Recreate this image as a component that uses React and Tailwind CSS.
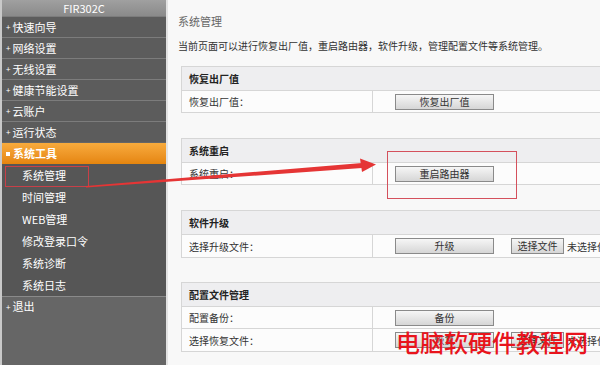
import React from 'react';

const font = { fontFamily: '"Noto Sans CJK SC", "Liberation Sans", sans-serif' };

const navTop = ['快速向导', '网络设置', '无线设置', '健康节能设置', '云账户', '运行状态'];
const subMenu = ['系统管理', '时间管理', 'WEB管理', '修改登录口令', '系统诊断', '系统日志'];

const Btn = ({ children, className = 'w-[99px]' }) => (
  <div
    className={`${className} h-[16px] flex items-center justify-center border border-[#8a8a8a] bg-gradient-to-b from-[#f6f6f6] to-[#d6d6d6] text-[10px] text-[#333] leading-none`}
  >
    {children}
  </div>
);

const Row = ({ label, children, h = 'h-[22px]' }) => (
  <div className={`flex ${h} border-t border-[#d6d6d6]`}>
    <div className="w-[191px] shrink-0 flex items-center pl-[7px] text-[10px] text-[#333] border-r border-[#d6d6d6]">
      {label}
    </div>
    <div className="flex-1 flex items-center pl-[22px] gap-[17px]">{children}</div>
  </div>
);

const Box = ({ title, children, className = '' }) => (
  <div className={`ml-[3px] w-[440px] border border-[#d6d6d6] bg-[#fcfcfc] ${className}`}>
    <div className="h-[23px] flex items-center pl-[7px] bg-[#eeeef0] text-[10px] font-bold text-[#222]">
      {title}
    </div>
    {children}
  </div>
);

const App = () => {
  return (
    <div className="relative w-[600px] h-[365px] overflow-hidden flex bg-[#f8f8f8]" style={font}>
      {/* sidebar */}
      <div className="w-[168px] shrink-0 flex flex-col bg-[#666] border-l-2 border-[#c9c9c9] border-r-2 border-r-[#e2e2e2]">
        <div className="h-[16px] flex items-center justify-center bg-gradient-to-b from-[#a0a0a0] to-[#8a8a8a] text-white text-[11px] leading-none">
          FIR302C
        </div>
        {navTop.map((item) => (
          <div
            key={item}
            className="h-[21px] flex items-center pl-[4px] border-t border-[#7c7c7c] bg-[#5c5c5c] text-white text-[11px]"
          >
            <span className="text-[8px] mr-[2px]">+</span>
            {item}
          </div>
        ))}
        <div className="h-[21px] mt-[1px] flex items-center pl-[4px] bg-gradient-to-b from-[#f8ab3c] to-[#e5850c] text-white text-[11px] font-bold">
          <span className="inline-block w-[4px] h-[4px] bg-white mr-[3px]" />
          系统工具
        </div>
        <div className="bg-[#565656]">
          {subMenu.map((item) => (
            <div key={item} className="h-[22px] flex items-center pl-[20px] text-white text-[11px]">
              {item}
            </div>
          ))}
        </div>
        <div className="h-[20px] flex items-center pl-[4px] border-t border-[#8a8a8a] text-white text-[11px]">
          <span className="text-[8px] mr-[2px]">+</span>
          退出
        </div>
      </div>

      {/* main */}
      <div className="flex-1 pl-[10px] pt-[14px] overflow-hidden">
        <div className="text-[11px] leading-[14px] text-[#666]">系统管理</div>
        <div className="mt-[11px] text-[10px] leading-[14px] text-[#333] whitespace-nowrap">
          当前页面可以进行恢复出厂值，重启路由器，软件升级，管理配置文件等系统管理。
        </div>

        <Box title="恢复出厂值" className="mt-[13px]">
          <Row label="恢复出厂值：">
            <Btn>恢复出厂值</Btn>
          </Row>
        </Box>

        <Box title="系统重启" className="mt-[25px]">
          <Row label="系统重启：">
            <Btn>重启路由器</Btn>
          </Row>
        </Box>

        <Box title="软件升级" className="mt-[25px]">
          <Row label="选择升级文件：" h="h-[23px]">
            <Btn>升级</Btn>
            <div className="flex items-center gap-[3px]">
              <Btn className="w-[53px]">选择文件</Btn>
              <span className="text-[10px] text-[#333] whitespace-nowrap">未选择任何文件</span>
            </div>
          </Row>
        </Box>

        <Box title="配置文件管理" className="mt-[24px]">
          <Row label="配置备份：">
            <Btn>备份</Btn>
          </Row>
          <Row label="选择恢复文件：" h="h-[23px]">
            <Btn>恢复</Btn>
            <div className="flex items-center gap-[3px]">
              <Btn className="w-[53px]">选择文件</Btn>
              <span className="text-[10px] text-[#333] whitespace-nowrap">未选择任何文件</span>
            </div>
          </Row>
        </Box>
      </div>

      {/* annotations */}
      <svg className="absolute inset-0 pointer-events-none" width="600" height="365">
        <rect x="5.5" y="166.5" width="83" height="20" fill="none" stroke="#c84048" strokeWidth="1" />
        <rect x="387.5" y="151.5" width="129" height="47" fill="none" stroke="#d4505c" strokeWidth="1" />
        <polygon points="86,186 362,163 362,168 86,187.5" fill="#e53535" />
        <polygon points="360,158.5 376,164.5 362,172" fill="#e53535" />
      </svg>

      <div
        className="absolute left-[396px] top-[327px] text-[24px] leading-[30px] font-medium text-[#e8141c] whitespace-nowrap"
        style={font}
      >
        电脑软硬件教程网
      </div>
    </div>
  );
};

export default App;
